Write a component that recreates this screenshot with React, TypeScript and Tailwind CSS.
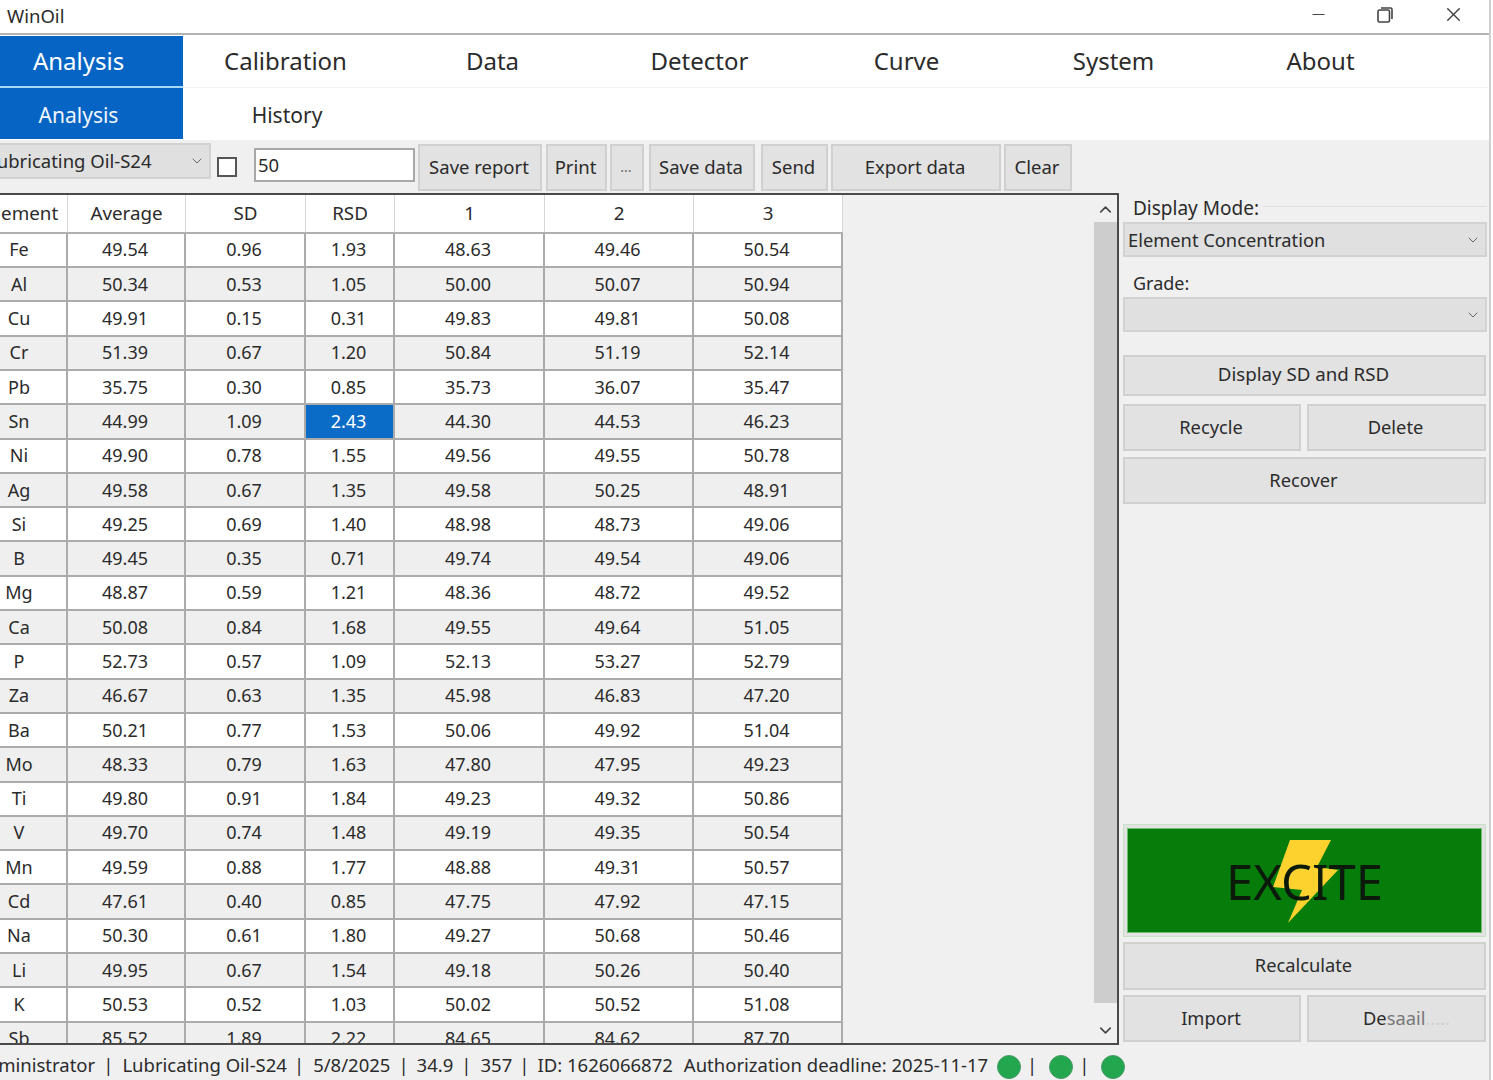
import { ChevronDown, ChevronUp, Minus, X } from "lucide-react";

const rows = [
  ["Fe", "49.54", "0.96", "1.93", "48.63", "49.46", "50.54"],
  ["Al", "50.34", "0.53", "1.05", "50.00", "50.07", "50.94"],
  ["Cu", "49.91", "0.15", "0.31", "49.83", "49.81", "50.08"],
  ["Cr", "51.39", "0.67", "1.20", "50.84", "51.19", "52.14"],
  ["Pb", "35.75", "0.30", "0.85", "35.73", "36.07", "35.47"],
  ["Sn", "44.99", "1.09", "2.43", "44.30", "44.53", "46.23"],
  ["Ni", "49.90", "0.78", "1.55", "49.56", "49.55", "50.78"],
  ["Ag", "49.58", "0.67", "1.35", "49.58", "50.25", "48.91"],
  ["Si", "49.25", "0.69", "1.40", "48.98", "48.73", "49.06"],
  ["B", "49.45", "0.35", "0.71", "49.74", "49.54", "49.06"],
  ["Mg", "48.87", "0.59", "1.21", "48.36", "48.72", "49.52"],
  ["Ca", "50.08", "0.84", "1.68", "49.55", "49.64", "51.05"],
  ["P", "52.73", "0.57", "1.09", "52.13", "53.27", "52.79"],
  ["Za", "46.67", "0.63", "1.35", "45.98", "46.83", "47.20"],
  ["Ba", "50.21", "0.77", "1.53", "50.06", "49.92", "51.04"],
  ["Mo", "48.33", "0.79", "1.63", "47.80", "47.95", "49.23"],
  ["Ti", "49.80", "0.91", "1.84", "49.23", "49.32", "50.86"],
  ["V", "49.70", "0.74", "1.48", "49.19", "49.35", "50.54"],
  ["Mn", "49.59", "0.88", "1.77", "48.88", "49.31", "50.57"],
  ["Cd", "47.61", "0.40", "0.85", "47.75", "47.92", "47.15"],
  ["Na", "50.30", "0.61", "1.80", "49.27", "50.68", "50.46"],
  ["Li", "49.95", "0.67", "1.54", "49.18", "50.26", "50.40"],
  ["K", "50.53", "0.52", "1.03", "50.02", "50.52", "51.08"],
  ["Sb", "85.52", "1.89", "2.22", "84.65", "84.62", "87.70"],
];

const headers = ["Element", "Average", "SD", "RSD", "1", "2", "3"];
const topTabs = ["Analysis", "Calibration", "Data", "Detector", "Curve", "System", "About"];

const Btn = ({ label, className = "" }: { label: string; className?: string }) => (
  <button className={`flex items-center justify-center pr-[2px] pb-[2px] bg-[#e2e2e2] border-2 border-[#d0d0d0] text-[#2b2b2b] ${className}`}>
    {label}
  </button>
);

const Combo = ({ label, className = "" }: { label: string; className?: string }) => (
  <div className={`flex items-center justify-between bg-[#e0e0e0] border-2 border-[#d2d2d2] text-[#2b2b2b] ${className}`}>
    <span>{label}</span>
    <ChevronDown className="w-4 h-4 mr-1 text-[#666]" strokeWidth={1.5} />
  </div>
);

const Dot = ({ className = "" }: { className?: string }) => (
  <span className={`w-6 h-6 mt-[3px] rounded-full bg-[#22a64e] border border-[#4c9a68] ${className}`} />
);

const App = () => {
  return (
    <div className="w-[1493px] h-[1080px] overflow-hidden bg-white font-['Noto_Sans',sans-serif] text-[#2b2b2b]">
      <div className="w-[1491px] h-full flex flex-col border-r-2 border-[#cfcfcf] bg-[#f0f0f0]">
        {/* Title bar */}
        <div className="h-[35px] shrink-0 flex items-center justify-between bg-white border-b-2 border-[#b4b4b4] pl-[7px] text-[18.5px]">
          <span className="-mt-[2px]">WinOil</span>
          <div className="flex items-center gap-[49px] pr-[24px] -mt-[4px] text-[#444]">
            <Minus className="w-[19px] h-[19px]" strokeWidth={1.5} />
            <svg className="w-[16px] h-[16px]" viewBox="0 0 16 16" fill="none" stroke="currentColor" strokeWidth="1.6">
              <rect x="1" y="3" width="11.5" height="12" rx="1.5" />
              <path d="M4 1h9.5A1.5 1.5 0 0 1 15 2.5V12" />
            </svg>
            <X className="w-[23px] h-[23px]" strokeWidth={1.5} />
          </div>
        </div>

        {/* Main tabs */}
        <div className="h-[53px] shrink-0 flex items-center bg-white shadow-[inset_0_-1px_0_#f2f2f2] -ml-[26px] text-[24px]">
          {topTabs.map((tab, i) => (
            <div
              key={tab}
              className={`flex items-center justify-center ${i === 0 ? "w-[209px] h-[52px] self-end border-b-2 border-[#a8d8f8] bg-[#0665c4] text-white" : "w-[207px] h-[50px] -mt-[2px] pr-[2px]"}`}
            >
              {tab}
            </div>
          ))}
        </div>

        {/* Sub tabs */}
        <div className="h-[52px] shrink-0 flex items-start bg-white -ml-[26px] text-[21px]">
          <div className="w-[209px] h-[51px] pt-[5px] flex items-center justify-center bg-[#0665c4] text-[#f2f6fb]">Analysis</div>
          <div className="w-[208px] h-[51px] pt-[5px] flex items-center justify-center">History</div>
        </div>

        {/* Toolbar */}
        <div className="h-[53px] shrink-0 flex items-start text-[18.5px]">
          <Combo label="Lubricating Oil-S24" className="w-[231px] h-[36px] mt-[3px] -ml-[20px] pl-[5px] pb-[1px]" />
          <span className="w-[20px] h-[20px] mt-[17px] ml-[6px] bg-white border-2 border-[#555]" />
          <div className="w-[161px] h-[34px] mt-[8px] ml-[17px] flex items-center bg-white border-2 border-[#a8a8a8] pl-[2px]">50</div>
          <Btn label="Save report" className="w-[124px] h-[47px] mt-[4px] ml-[3px]" />
          <Btn label="Print" className="w-[61px] h-[47px] mt-[4px] ml-[4px]" />
          <Btn label="..." className="w-[34px] h-[47px] mt-[4px] ml-[3px] text-[14px] text-[#666]" />
          <Btn label="Save data" className="w-[106px] h-[47px] mt-[4px] ml-[5px]" />
          <Btn label="Send" className="w-[67px] h-[47px] mt-[4px] ml-[6px]" />
          <Btn label="Export data" className="w-[170px] h-[47px] mt-[4px] ml-[3px]" />
          <Btn label="Clear" className="w-[68px] h-[47px] mt-[4px] ml-[3px]" />
        </div>

        {/* Body */}
        <div className="h-[852px] shrink-0 flex">
          <div className="w-[1119px] h-full flex overflow-hidden border-y-2 border-r-2 border-[#4a4a4a]">
            <div className="w-[869px] shrink-0 -ml-[26px] text-[18px]">
              <div className="grid grid-cols-[94px_118px_120px_89px_150px_149px_149px] h-[38.8px] text-[18.8px] bg-white border-b-2 border-[#b0b0b0]">
                {headers.map((h, i) => (
                  <div key={h} className={`flex items-center justify-center border-r border-[#d6d6d6] ${i === 0 ? "pl-[3px]" : ""}`}>
                    {h}
                  </div>
                ))}
              </div>
              {rows.map((row, r) => (
                <div
                  key={row[0]}
                  className={`grid grid-cols-[94px_118px_120px_89px_150px_149px_149px] h-[34.3px] border-b-2 border-[#ababab] ${r % 2 ? "bg-[#efefef]" : "bg-white"}`}
                >
                  {row.map((cell, c) => (
                    <div
                      key={c}
                      className={`flex items-center justify-center pr-[2px] border-r-2 border-[#ababab] ${r === 5 && c === 3 ? "bg-[#0a6cc6] text-white" : ""}`}
                    >
                      {cell}
                    </div>
                  ))}
                </div>
              ))}
            </div>
            <div className="flex-1 bg-[#f0f0f0]" />
            <div className="w-[23px] shrink-0 flex flex-col items-center bg-[#f0f0f0]">
              <ChevronUp className="w-[19px] h-[19px] mt-[5px] mb-[3px] text-[#444]" strokeWidth={2} />
              <div className="w-full flex-1 bg-[#cdcdcd]" />
              <ChevronDown className="w-[19px] h-[19px] mt-[18px] mb-[3px] text-[#444]" strokeWidth={2} />
            </div>
          </div>

          {/* Right panel */}
          <div className="flex-1 flex flex-col pl-[4px] pr-[2px] pb-[3px] text-[18.3px]">
            <div className="h-[29px] shrink-0 flex items-center gap-[4px]">
              <span className="pl-[10px] pt-[1px] text-[19px]">Display Mode:</span>
              <div className="flex-1 h-px -mt-[3px] bg-[#e0e0e0]" />
            </div>
            <Combo label="Element Concentration" className="h-[35px] pl-[3px] shrink-0" />
            <span className="h-[40px] shrink-0 pl-[10px] pt-[12px] text-[18px] leading-[28px]">Grade:</span>
            <Combo label="" className="h-[35px] pl-[4px] shrink-0" />
            <Btn label="Display SD and RSD" className="h-[41px] mt-[23px] mr-[1px] shrink-0 text-[18.7px]" />
            <div className="flex gap-[6px] mt-[8px] mr-[1px] shrink-0">
              <Btn label="Recycle" className="w-[178px] h-[47px]" />
              <Btn label="Delete" className="flex-1 h-[47px]" />
            </div>
            <Btn label="Recover" className="h-[47px] mt-[6px] mr-[1px] shrink-0" />
            <div className="flex-1" />
            <div className="relative h-[113px] mr-[1px] p-[3px] bg-[#e2e2e2] border border-[#c8e0c8] shrink-0">
              <div className="w-full h-full flex items-center justify-center pt-[2px] bg-[#067c0a] border border-[#6fbf6f]">
                <svg className="absolute left-[149px] top-[15px] w-[66px] h-[84px]" viewBox="0 0 66 84">
                  <polygon points="17,0 58,0 44,27 65,30 15,83 29,50 0,47" fill="#fdd22f" />
                </svg>
                <span className="relative text-[49px] leading-none text-[#0b1a0b]">EXCITE</span>
              </div>
            </div>
            <Btn label="Recalculate" className="h-[48px] mt-[5px] mr-[1px] shrink-0" />
            <div className="flex gap-[6px] mt-[5px] mr-[1px] shrink-0">
              <Btn label="Import" className="w-[178px] h-[47px]" />
              <button className="flex-1 h-[47px] flex items-center justify-start pl-[54px] pb-[2px] bg-[#e2e2e2] border-2 border-[#d0d0d0]">
                De<span className="text-[#777]">saail</span>
                <span className="text-[#cfcfcf]">.....</span>
              </button>
            </div>
          </div>
        </div>

        {/* Status bar */}
        <div className="flex-1 flex items-center whitespace-nowrap pt-[5px] -ml-[25px] text-[18.5px]">
          <span>Administrator</span>
          <span className="ml-[8px]">|</span>
          <span className="ml-[9px]">Lubricating Oil-S24</span>
          <span className="ml-[7px]">|</span>
          <span className="ml-[9px]">5/8/2025</span>
          <span className="ml-[8px]">|</span>
          <span className="ml-[8px]">34.9</span>
          <span className="ml-[8px]">|</span>
          <span className="ml-[9px]">357</span>
          <span className="ml-[7px]">|</span>
          <span className="ml-[8px]">ID: 1626066872</span>
          <span className="ml-[11px]">Authorization deadline: 2025-11-17</span>
          <Dot className="ml-[9px]" />
          <span className="ml-[6px]">|</span>
          <Dot className="ml-[12px]" />
          <span className="ml-[6px]">|</span>
          <Dot className="ml-[11px]" />
        </div>
      </div>
    </div>
  );
};

export default App;
